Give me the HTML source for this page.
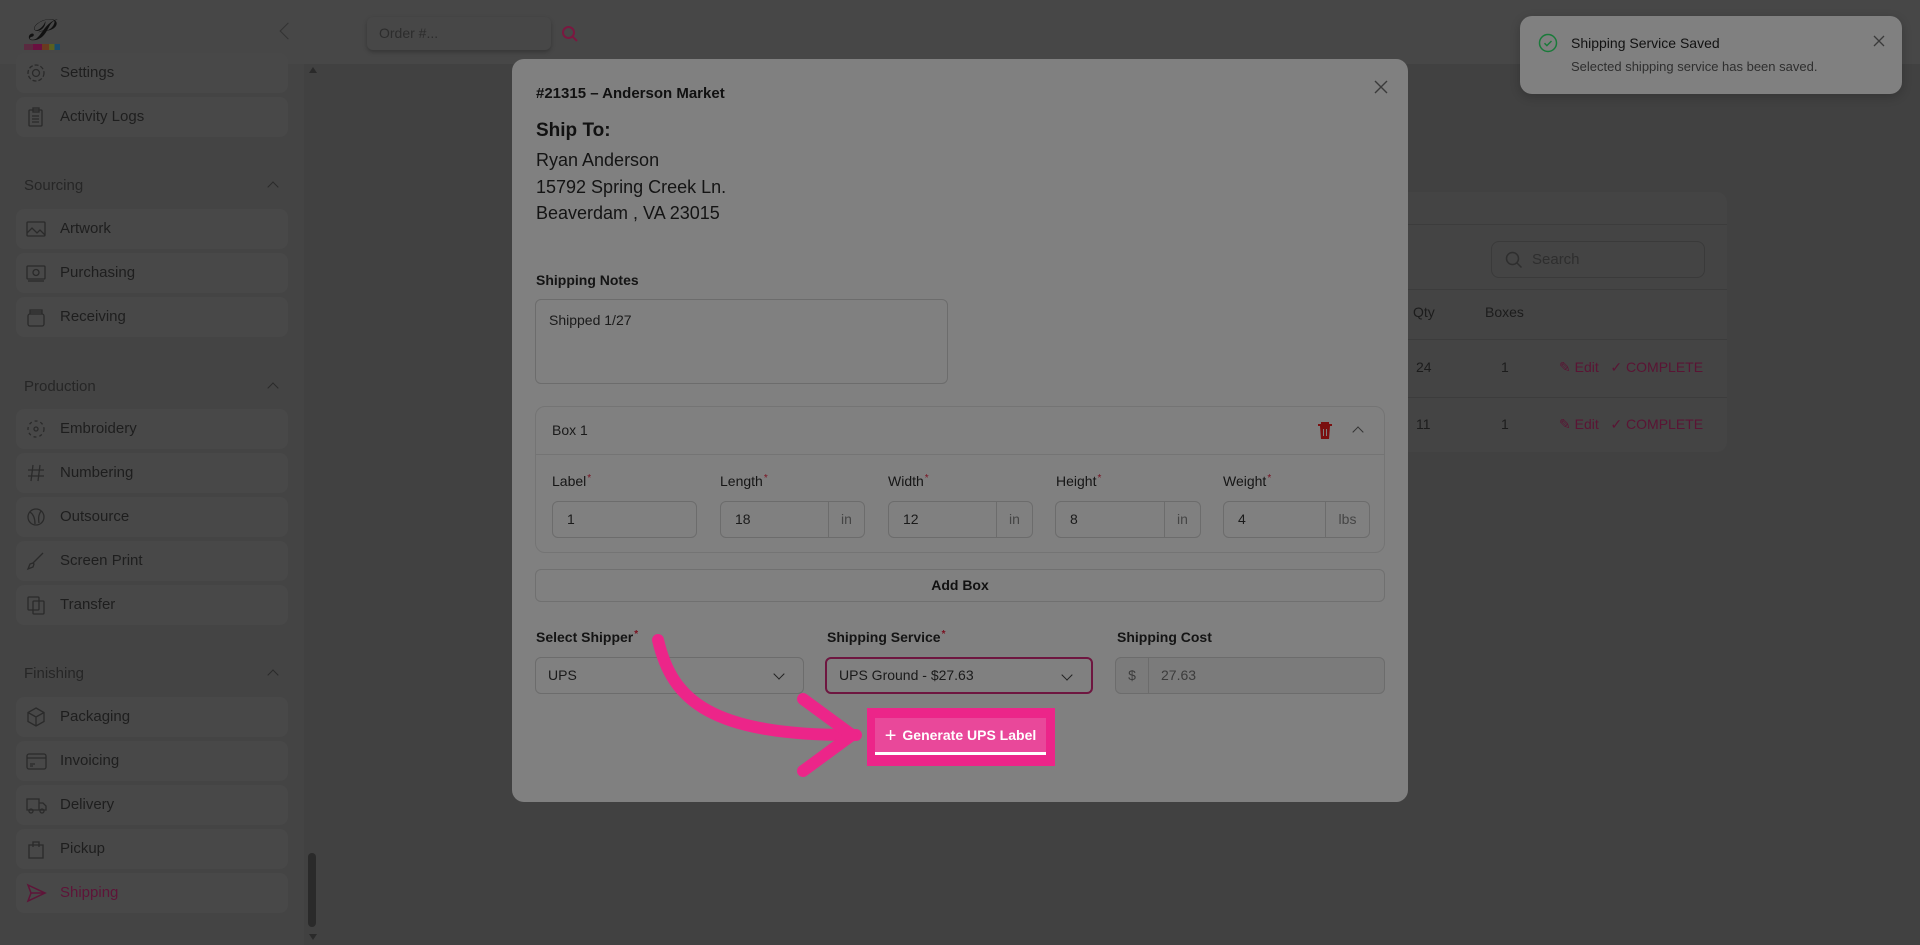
<!DOCTYPE html>
<html><head><meta charset="utf-8">
<style>
*{box-sizing:border-box;margin:0;padding:0}
body{width:1920px;height:945px;overflow:hidden;background:#414141;font-family:"Liberation Sans",sans-serif;position:relative;color:#1a1a1a}
.abs{position:absolute}
.side{left:0;top:0;width:304px;height:945px;background:#444}
.hdr{left:0;top:0;width:1920px;height:64px;background:#474747}
.item{position:absolute;left:16px;width:272px;height:40px;background:#484848;border-radius:8px;font-size:15px;color:#1e1e1e;line-height:40px;padding-left:44px}
.item svg{position:absolute;left:9px;top:9px}
.grp{position:absolute;left:24px;font-size:15px;color:#262626}
.grp:after{content:"";position:absolute;left:245px;top:6px;width:7px;height:7px;border-left:1.5px solid #2a2a2a;border-top:1.5px solid #2a2a2a;transform:rotate(45deg)}
.modal{left:512px;top:59px;width:896px;height:743px;background:#808080;border-radius:12px}
.m{position:absolute}
.lbl{font-size:14px;font-weight:bold;color:#141414}
.req:after{content:"*";color:#7a1020;font-size:10px;vertical-align:top;margin-left:1px}
.inp{position:absolute;height:37px;border:1px solid #6c6c6c;border-radius:6px;font-size:14px;color:#1a1a1a;line-height:35px;padding-left:14px}
.suf{position:absolute;right:0;top:0;height:35px;border-left:1px solid #6c6c6c;color:#454545;text-align:center;padding:0}
.sel{position:absolute;height:37px;border:1px solid #6c6c6c;border-radius:6px;font-size:14px;line-height:35px;padding-left:12px}
.sel:after{content:"";position:absolute;right:20px;top:12px;width:7px;height:7px;border-right:1.5px solid #222;border-bottom:1.5px solid #222;transform:rotate(45deg)}
</style></head><body>
<div class="abs hdr"></div>
<div class="abs side" style="top:64px;height:881px"></div>
<div class="abs" style="left:28px;top:14px;font-family:'Liberation Serif',serif;font-style:italic;font-size:30px;color:#111">𝒫</div>
<div class="abs" style="left:24px;top:44px;width:36px;height:6px;background:linear-gradient(90deg,#5a2a40 0 25%,#6a1040 25% 50%,#6a3a20 50% 70%,#5a6020 70% 85%,#1a4a6a 85%)"></div>
<div class="abs" style="left:282px;top:25px;width:12px;height:12px;border-left:1.5px solid #333;border-bottom:1.5px solid #333;transform:rotate(45deg)"></div>
<div class="abs" style="left:367px;top:17px;width:184px;height:33px;background:#474747;border-radius:6px;box-shadow:0 2px 4px rgba(0,0,0,.25);font-size:14px;color:#2c2c2c;line-height:33px;padding-left:12px">Order #...</div>
<svg class="abs" style="left:561px;top:25px" width="18" height="18" viewBox="0 0 18 18"><circle cx="7.5" cy="7.5" r="5.5" fill="none" stroke="#7a1840" stroke-width="2"/><line x1="11.5" y1="11.5" x2="16" y2="16" stroke="#7a1840" stroke-width="2"/></svg>

<div class="item" style="top:53px"><svg width="22" height="22" viewBox="0 0 22 22" fill="none" stroke="#2a2a2a" stroke-width="1.3"><circle cx="11" cy="11" r="3.5"/><circle cx="11" cy="11" r="8" stroke-dasharray="4 2"/></svg>Settings</div>
<div class="item" style="top:97px"><svg width="22" height="22" viewBox="0 0 22 22" fill="none" stroke="#2a2a2a" stroke-width="1.3"><rect x="4" y="4" width="13" height="16" rx="1"/><rect x="8" y="2" width="6" height="4"/><path d="M7 10h7M7 13h7M7 16h7"/></svg>Activity Logs</div>
<div class="grp" style="top:177px">Sourcing</div>
<div class="item" style="top:209px"><svg width="22" height="22" viewBox="0 0 22 22" fill="none" stroke="#2a2a2a" stroke-width="1.3"><rect x="2" y="4" width="18" height="14" rx="1"/><path d="M2 15l5-5 5 5 3-3 5 5"/></svg>Artwork</div>
<div class="item" style="top:253px"><svg width="22" height="22" viewBox="0 0 22 22" fill="none" stroke="#2a2a2a" stroke-width="1.3"><rect x="2" y="4" width="18" height="13" rx="1"/><circle cx="11" cy="10.5" r="3"/><path d="M3 19h16"/></svg>Purchasing</div>
<div class="item" style="top:297px"><svg width="22" height="22" viewBox="0 0 22 22" fill="none" stroke="#2a2a2a" stroke-width="1.3"><rect x="3" y="8" width="16" height="12" rx="2"/><path d="M5 8V4h12v4M5 6h12"/></svg>Receiving</div>
<div class="grp" style="top:378px">Production</div>
<div class="item" style="top:409px"><svg width="22" height="22" viewBox="0 0 22 22" fill="none" stroke="#2a2a2a" stroke-width="1.3"><circle cx="11" cy="11" r="8" stroke-dasharray="3 3"/><circle cx="11" cy="11" r="2"/></svg>Embroidery</div>
<div class="item" style="top:453px"><svg width="22" height="22" viewBox="0 0 22 22" fill="none" stroke="#2a2a2a" stroke-width="1.3"><path d="M8 3L6 19M15 3l-2 16M3 8h16M3 14h16"/></svg>Numbering</div>
<div class="item" style="top:497px"><svg width="22" height="22" viewBox="0 0 22 22" fill="none" stroke="#2a2a2a" stroke-width="1.3"><circle cx="11" cy="11" r="8"/><path d="M5 6c3 2 5 5 5 12M16 5c-2 3-3 6-2 12"/></svg>Outsource</div>
<div class="item" style="top:541px"><svg width="22" height="22" viewBox="0 0 22 22" fill="none" stroke="#2a2a2a" stroke-width="1.3"><path d="M18 3L8 13M8 13l-3 1-2 5 5-2 1-3z"/></svg>Screen Print</div>
<div class="item" style="top:585px"><svg width="22" height="22" viewBox="0 0 22 22" fill="none" stroke="#2a2a2a" stroke-width="1.3"><rect x="3" y="3" width="11" height="13" rx="1"/><rect x="8" y="7" width="11" height="13" rx="1"/></svg>Transfer</div>
<div class="grp" style="top:665px">Finishing</div>
<div class="item" style="top:697px"><svg width="22" height="22" viewBox="0 0 22 22" fill="none" stroke="#2a2a2a" stroke-width="1.3"><path d="M11 2l8 4.5v9L11 20l-8-4.5v-9z M3 6.5l8 4.5 8-4.5M11 11v9"/></svg>Packaging</div>
<div class="item" style="top:741px"><svg width="22" height="22" viewBox="0 0 22 22" fill="none" stroke="#2a2a2a" stroke-width="1.3"><rect x="2" y="4" width="19" height="15" rx="2"/><path d="M2 8h19M5 14h5M5 16h3"/></svg>Invoicing</div>
<div class="item" style="top:785px"><svg width="22" height="22" viewBox="0 0 22 22" fill="none" stroke="#2a2a2a" stroke-width="1.3"><path d="M2 5h12v11H2zM14 9h4l3 3v4h-7"/><circle cx="6" cy="17" r="2"/><circle cx="17" cy="17" r="2"/></svg>Delivery</div>
<div class="item" style="top:829px"><svg width="22" height="22" viewBox="0 0 22 22" fill="none" stroke="#2a2a2a" stroke-width="1.3"><path d="M4 7h14v13H4zM8 9V4h6v5"/></svg>Pickup</div>
<div class="item" style="top:873px;color:#5e1438"><svg width="22" height="22" viewBox="0 0 22 22" fill="none" stroke="#5e1438" stroke-width="1.5"><path d="M3 3l17 8-17 8 3-8z M6 11h14"/></svg>Shipping</div>
<div class="abs" style="left:309px;top:67px;width:0;height:0;border-left:4px solid transparent;border-right:4px solid transparent;border-bottom:6px solid #2a2a2a"></div>
<div class="abs" style="left:308px;top:853px;width:8px;height:74px;background:#2a2a2a;border-radius:4px"></div>
<div class="abs" style="left:309px;top:934px;width:0;height:0;border-left:4px solid transparent;border-right:4px solid transparent;border-top:6px solid #2a2a2a"></div>

<div class="abs" style="left:1380px;top:192px;width:347px;height:260px;background:#444;border-radius:10px">
 <div class="abs" style="left:0;top:32px;width:347px;border-top:1px solid #3c3c3c"></div>
 <div class="abs" style="left:111px;top:49px;width:214px;height:37px;border:1px solid #3a3a3a;border-radius:8px;font-size:15px;color:#2e2e2e;line-height:35px;padding-left:40px">
  <svg class="abs" style="left:13px;top:9px" width="18" height="18" viewBox="0 0 18 18" fill="none" stroke="#2e2e2e" stroke-width="1.5"><circle cx="7.5" cy="7.5" r="6"/><path d="M12 12l4.5 4.5"/></svg>Search</div>
 <div class="abs" style="left:0;top:97px;width:347px;border-top:1px solid #3c3c3c"></div>
 <div class="abs" style="left:33px;top:112px;font-size:14px;color:#1c1c1c">Qty</div>
 <div class="abs" style="left:105px;top:112px;font-size:14px;color:#1c1c1c">Boxes</div>
 <div class="abs" style="left:0;top:147px;width:347px;border-top:1px solid #3c3c3c"></div>
 <div class="abs" style="left:36px;top:167px;font-size:14px;color:#1c1c1c">24</div>
 <div class="abs" style="left:121px;top:167px;font-size:14px;color:#1c1c1c">1</div>
 <div class="abs" style="left:179px;top:167px;font-size:14px;color:#5a1434">✎ Edit&nbsp;&nbsp;&nbsp;✓ COMPLETE</div>
 <div class="abs" style="left:0;top:205px;width:347px;border-top:1px solid #3c3c3c"></div>
 <div class="abs" style="left:36px;top:224px;font-size:14px;color:#1c1c1c">11</div>
 <div class="abs" style="left:121px;top:224px;font-size:14px;color:#1c1c1c">1</div>
 <div class="abs" style="left:179px;top:224px;font-size:14px;color:#5a1434">✎ Edit&nbsp;&nbsp;&nbsp;✓ COMPLETE</div>
</div>

<div class="abs" style="left:1520px;top:16px;width:382px;height:78px;background:#808080;border-radius:12px;box-shadow:0 3px 10px rgba(0,0,0,.2)">
 <svg class="abs" style="left:18px;top:17px" width="20" height="20" viewBox="0 0 20 20" fill="none" stroke="#1a7a3a" stroke-width="1.5"><circle cx="10" cy="10" r="8.5"/><path d="M6.5 10.2l2.4 2.4 4.6-4.6"/></svg>
 <div class="abs" style="left:51px;top:19px;font-size:14px;color:#111">Shipping Service Saved</div>
 <div class="abs" style="left:51px;top:43px;font-size:13px;color:#2e2e2e">Selected shipping service has been saved.</div>
 <svg class="abs" style="left:352px;top:18px" width="14" height="14" viewBox="0 0 14 14" stroke="#3a3a3a" stroke-width="1.3"><path d="M2 2l10 10M12 2L2 12"/></svg>
</div>

<div class="abs modal">
 <svg class="m" style="left:861px;top:20px" width="16" height="16" viewBox="0 0 16 16" stroke="#3a3a3a" stroke-width="1.4"><path d="M2 2l12 12M14 2L2 14"/></svg>
 <div class="m" style="left:24px;top:26px;font-size:15px;font-weight:bold;color:#111">#21315 – Anderson Market</div>
 <div class="m" style="left:24px;top:61px;font-size:19px;font-weight:bold;color:#111">Ship To:</div>
 <div class="m" style="left:24px;top:88px;font-size:18px;line-height:26.5px;color:#141414">Ryan Anderson<br>15792 Spring Creek Ln.<br>Beaverdam , VA 23015</div>
 <div class="m lbl" style="left:24px;top:213px">Shipping Notes</div>
 <div class="m" style="left:23px;top:240px;width:413px;height:85px;border:1px solid #6c6c6c;border-radius:6px;font-size:14px;padding:12px 13px">Shipped 1/27</div>
 <div class="m" style="left:23px;top:347px;width:850px;height:147px;border:1px solid #747474;border-radius:10px">
  <div class="m" style="left:0;top:47px;width:848px;border-top:1px solid #747474"></div>
  <div class="m" style="left:16px;top:15px;font-size:14px">Box 1</div>
  <svg class="m" style="left:781px;top:14px" width="16" height="19" viewBox="0 0 16 19"><path d="M1 4h14M5 4V2h6v2" stroke="#7a1010" stroke-width="2" fill="none"/><path d="M3 5h10l-1 13H4z" fill="#7a1010"/><path d="M6.5 8v7M9.5 8v7" stroke="#808080" stroke-width="1"/></svg>
  <div class="m" style="left:818px;top:21px;width:8px;height:8px;border-left:1.5px solid #333;border-top:1.5px solid #333;transform:rotate(45deg)"></div>
  <div class="m lbl req" style="left:16px;top:66px;font-weight:normal;color:#151515">Label</div>
  <div class="m lbl req" style="left:184px;top:66px;font-weight:normal;color:#151515">Length</div>
  <div class="m lbl req" style="left:352px;top:66px;font-weight:normal;color:#151515">Width</div>
  <div class="m lbl req" style="left:520px;top:66px;font-weight:normal;color:#151515">Height</div>
  <div class="m lbl req" style="left:687px;top:66px;font-weight:normal;color:#151515">Weight</div>
  <div class="inp" style="left:16px;top:94px;width:145px">1</div>
  <div class="inp" style="left:184px;top:94px;width:145px">18<div class="suf" style="width:36px">in</div></div>
  <div class="inp" style="left:352px;top:94px;width:145px">12<div class="suf" style="width:36px">in</div></div>
  <div class="inp" style="left:519px;top:94px;width:146px">8<div class="suf" style="width:36px">in</div></div>
  <div class="inp" style="left:687px;top:94px;width:147px">4<div class="suf" style="width:44px">lbs</div></div>
 </div>
 <div class="m" style="left:23px;top:510px;width:850px;height:33px;border:1px solid #707070;border-radius:6px;text-align:center;line-height:31px;font-size:14px;font-weight:bold;color:#111">Add Box</div>
 <div class="m lbl req" style="left:24px;top:570px">Select Shipper</div>
 <div class="m lbl req" style="left:315px;top:570px">Shipping Service</div>
 <div class="m lbl" style="left:605px;top:570px">Shipping Cost</div>
 <div class="sel" style="left:23px;top:598px;width:269px">UPS</div>
 <div class="sel" style="left:313px;top:598px;width:268px;border:2px solid #6e1640;line-height:33px">UPS Ground - $27.63</div>
 <div class="m" style="left:603px;top:598px;width:270px;height:37px;border:1px solid #6c6c6c;border-radius:6px;background:#7b7b7b;font-size:14px;line-height:35px;color:#3c3c3c">
  <div class="m" style="left:0;top:0;width:33px;height:35px;border-right:1px solid #6c6c6c;text-align:center">$</div>
  <div class="m" style="left:45px;top:0">27.63</div>
 </div>
 <div class="m" style="left:355px;top:649px;width:188px;height:58px;background:#ec2589"></div>
 <div class="m" style="left:363px;top:659px;width:171px;height:37px;background:#e9489a;border-bottom:3px solid #fff;color:#fff;font-weight:bold;font-size:14px;line-height:34px;text-align:center"><span style="font-weight:normal;font-size:20px;vertical-align:-2px;margin-right:6px">+</span>Generate UPS Label</div>
</div>
<svg class="abs" style="left:0;top:0" width="1920" height="945">
 <path d="M658,640 C 672,700 710,736 856,735" fill="none" stroke="#ec2589" stroke-width="12" stroke-linecap="round"/>
 <path d="M803,699 L852,735 L803,771" fill="none" stroke="#ec2589" stroke-width="12" stroke-linecap="round" stroke-linejoin="round"/>
</svg>
</body></html>
